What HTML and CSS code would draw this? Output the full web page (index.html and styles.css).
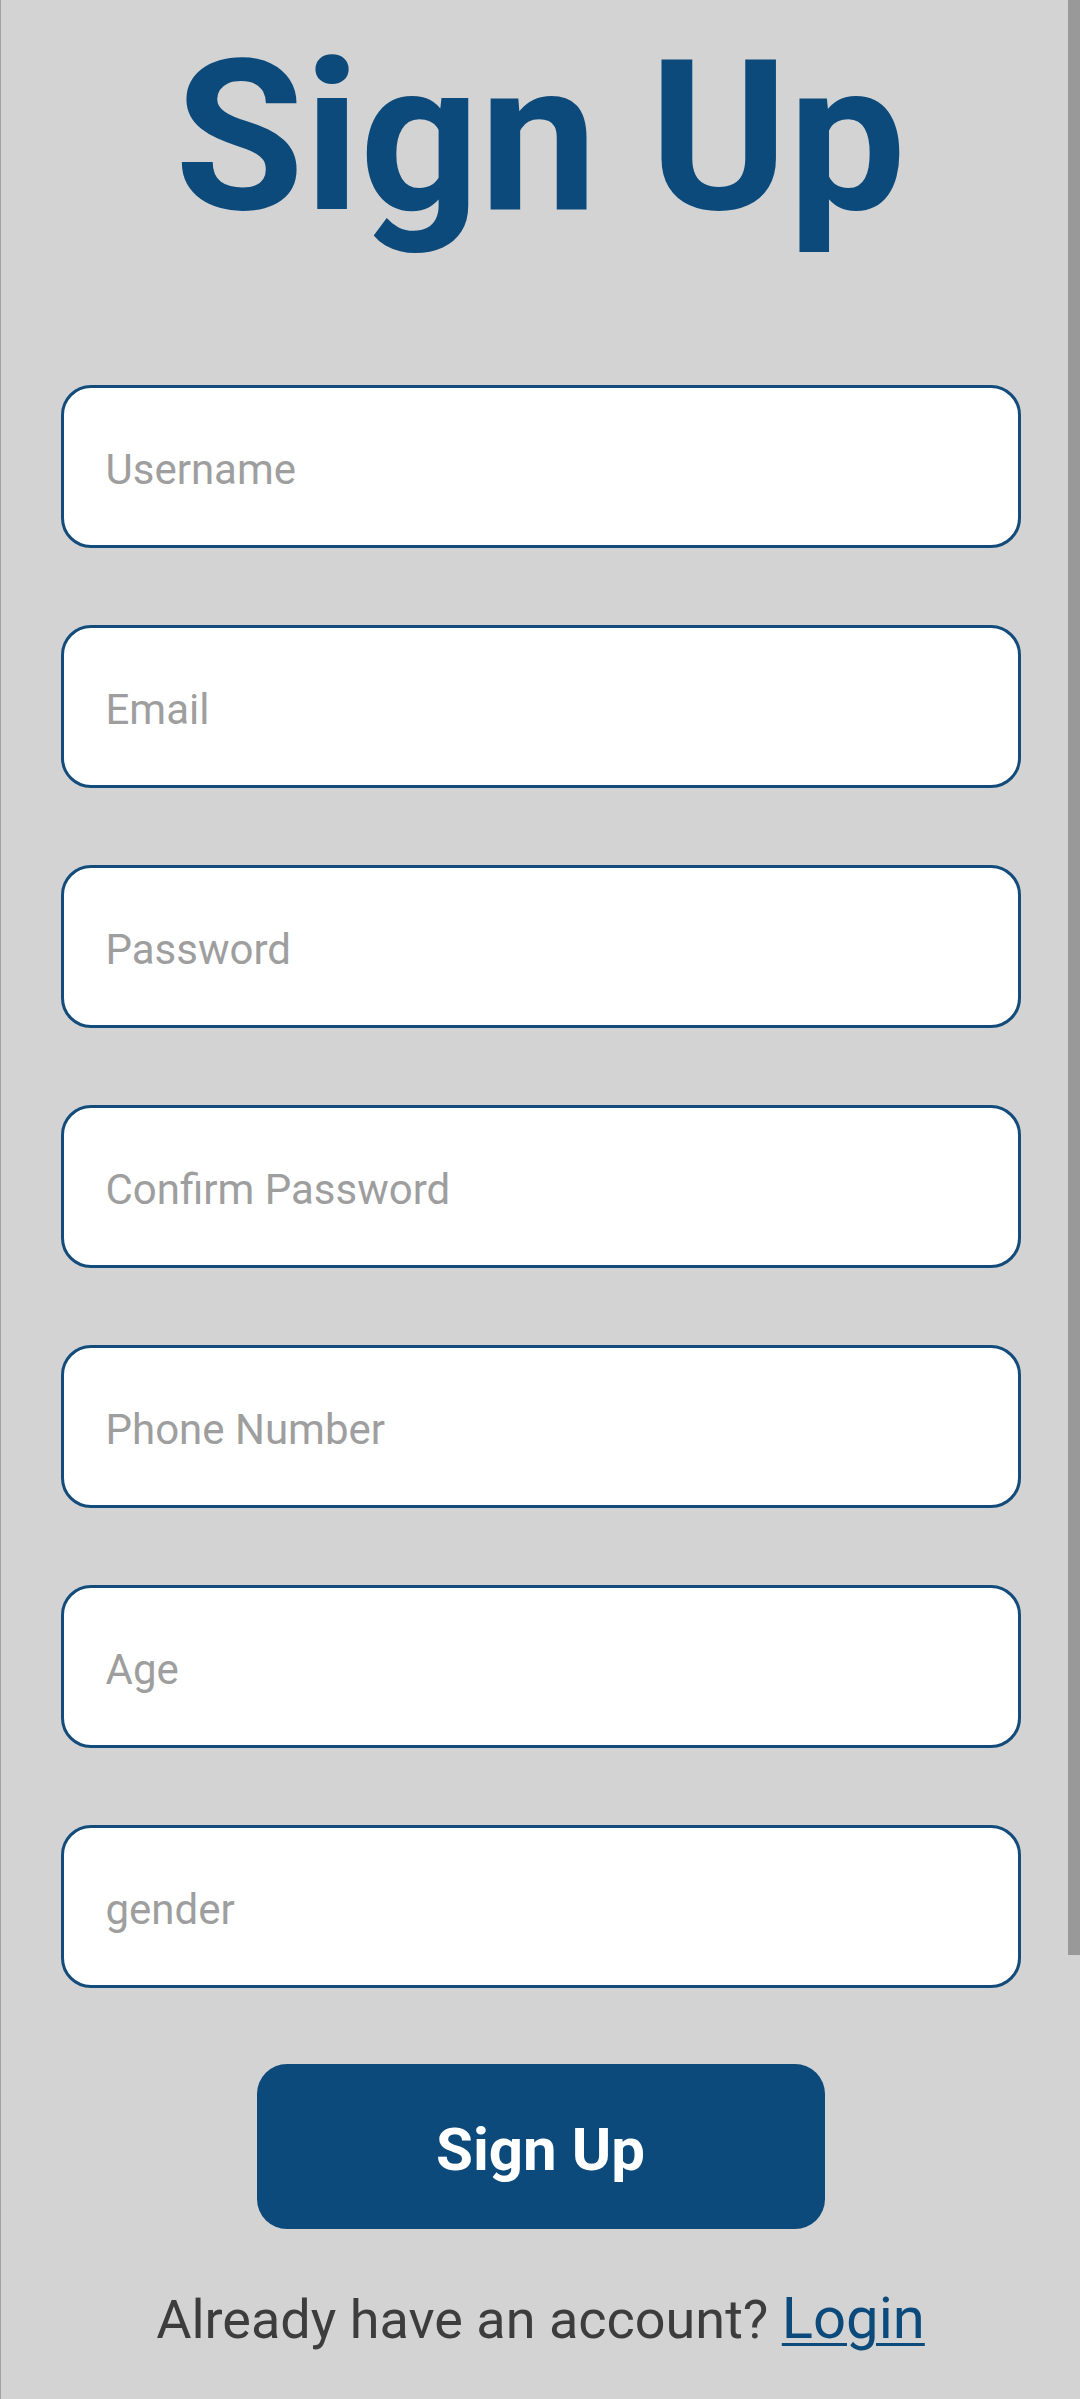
FILE: index.html
```html
<!DOCTYPE html>
<html lang="en">
<head>
<meta charset="utf-8">
<title>Sign Up</title>
<link rel="stylesheet" href="styles.css">
</head>
<body>
<div class="screen">
  <h1 class="title">Sign Up</h1>
  <form class="form">
    <input class="field" type="text" placeholder="Username">
    <input class="field" type="text" placeholder="Email">
    <input class="field" type="text" placeholder="Password">
    <input class="field" type="text" placeholder="Confirm Password">
    <input class="field" type="text" placeholder="Phone Number">
    <input class="field" type="text" placeholder="Age">
    <input class="field" type="text" placeholder="gender">
  </form>
  <button class="submit" type="button">Sign Up</button>
  <p class="footer">Already have an account? <a class="login" href="#">Login</a></p>
  <div class="scrollbar"></div>
</div>
</body>
</html>
```
FILE: styles.css
```css
html, body {
  margin: 0;
  padding: 0;
  background: #d3d3d3;
}

.screen {
  position: relative;
  box-sizing: border-box;
  width: 1080px;
  min-height: 2399px;
  border-left: 1px solid #a2a2a2;
  background: #d3d3d3;
  display: flex;
  flex-direction: column;
  align-items: center;
  font-family: Roboto, "Liberation Sans", sans-serif;
}

.title {
  margin: 0;
  padding-top: 11px;
  font-weight: 700;
  font-size: 210px;
  line-height: 1.2;
  color: #0c4a7b;
}

.form {
  margin: 122px 0 0;
  width: 960px;
  display: flex;
  flex-direction: column;
  gap: 77px;
}

.field {
  box-sizing: border-box;
  width: 100%;
  height: 163px;
  margin: 0;
  padding: 6px 42px 0;
  border: 3px solid #134c7b;
  border-radius: 30px;
  background: #ffffff;
  font-family: Roboto, "Liberation Sans", sans-serif;
  font-size: 42px;
  color: #333333;
  outline: none;
}

.field::placeholder {
  color: #9e9e9e;
  opacity: 1;
}

.submit {
  margin-top: 76px;
  width: 568px;
  height: 165px;
  border: none;
  border-radius: 30px;
  background: #0b4a7b;
  color: #ffffff;
  font-family: Roboto, "Liberation Sans", sans-serif;
  font-weight: 700;
  font-size: 60px;
  padding: 6px 0 0;
}

.footer {
  margin: 55px 0 0;
  font-size: 54px;
  line-height: normal;
  color: #3d3d3d;
}

.login {
  font-size: 58px;
  color: #0c4a7b;
  text-decoration: underline;
  text-decoration-thickness: 3px;
  text-underline-offset: 5px;
}

.scrollbar {
  position: absolute;
  top: 0;
  right: 0;
  width: 12px;
  height: 1955px;
  background: #999999;
}
```
